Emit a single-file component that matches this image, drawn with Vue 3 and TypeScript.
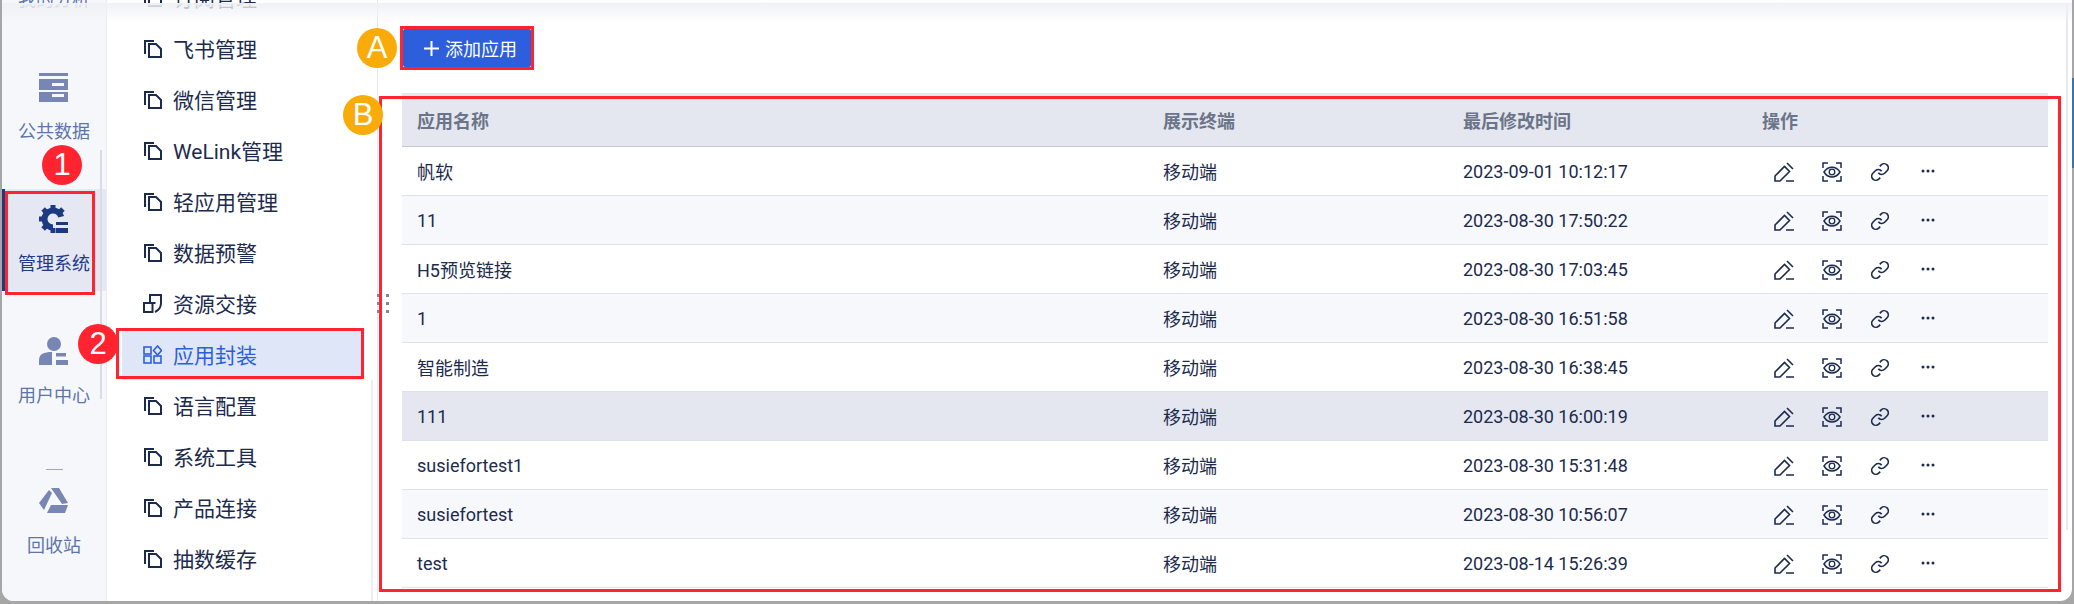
<script setup lang="ts">
const railItems = [
  { label: '我的分析', icon: 'chart', active: false },
  { label: '公共数据', icon: 'data', active: false },
  { label: '管理系统', icon: 'gear', active: true },
  { label: '用户中心', icon: 'user', active: false },
]

const gearTeeth = [-135, -90, -45, 0, 45, 180]

const menuItems = [
  { label: '订阅管理', icon: 'file' },
  { label: '飞书管理', icon: 'file' },
  { label: '微信管理', icon: 'file' },
  { label: 'WeLink管理', icon: 'file' },
  { label: '轻应用管理', icon: 'file' },
  { label: '数据预警', icon: 'file' },
  { label: '资源交接', icon: 'swap' },
  { label: '应用封装', icon: 'apps', active: true },
  { label: '语言配置', icon: 'file' },
  { label: '系统工具', icon: 'file' },
  { label: '产品连接', icon: 'file' },
  { label: '抽数缓存', icon: 'file' },
]

const rows = [
  { name: '帆软', time: '2023-09-01 10:12:17' },
  { name: '11', time: '2023-08-30 17:50:22' },
  { name: 'H5预览链接', time: '2023-08-30 17:03:45' },
  { name: '1', time: '2023-08-30 16:51:58' },
  { name: '智能制造', time: '2023-08-30 16:38:45' },
  { name: '111', time: '2023-08-30 16:00:19', hover: true },
  { name: 'susiefortest1', time: '2023-08-30 15:31:48' },
  { name: 'susiefortest', time: '2023-08-30 10:56:07' },
  { name: 'test', time: '2023-08-14 15:26:39' },
]
</script>

<template>
  <div class="edge"></div>
  <div class="window">
    <aside class="rail">
      <div
        v-for="item in railItems"
        :key="item.label"
        class="rail-item"
        :class="{ active: item.active }"
      >
        <svg class="rail-icon" viewBox="0 0 30 30">
          <g v-if="item.icon === 'data'">
            <rect x="0" y="1" width="29" height="3" />
            <path fill-rule="evenodd" d="M0 7h29v11H0zM13 11v3h12v-3z" />
            <path fill-rule="evenodd" d="M0 20h29v10H0zM13 22v3h12v-3z" />
          </g>
          <g v-else-if="item.icon === 'gear'">
            <path class="gear-ring" d="M22.200 12.800A8.500 8.500 0 1 0 14 23.500" />
            <rect
              v-for="a in gearTeeth"
              :key="a"
              x="11.500"
              y="1"
              width="5"
              height="5"
              :transform="`rotate(${a} 14 15)`"
            />
            <rect x="17" y="18" width="12" height="3" />
            <rect x="17" y="24" width="12" height="5" />
          </g>
          <g v-else-if="item.icon === 'user'">
            <circle cx="15" cy="8" r="7" />
            <path d="M0 29v-5c0-6 5-8 13-8v13z" />
            <rect x="17" y="17" width="10" height="3.5" />
            <rect x="17" y="24" width="12" height="5" />
          </g>
        </svg>
        <span class="rail-label">{{ item.label }}</span>
      </div>
      <div class="rail-line"></div>
      <div class="rail-item">
        <svg class="rail-icon" viewBox="0 0 30 30">
          <path d="M0 17 10 4l3 3-8 17z" />
          <path d="M12 2h8l9 15-6 1z" />
          <path d="M12 19h17l-3 8H8z" />
        </svg>
        <span class="rail-label">回收站</span>
      </div>
      <div class="rail-scroll"></div>
    </aside>

    <nav class="menu">
      <div
        v-for="item in menuItems"
        :key="item.label"
        class="menu-item"
        :class="{ active: item.active }"
      >
        <svg class="menu-icon" viewBox="0 0 19 19" fill="none" stroke="currentColor" stroke-width="2">
          <g v-if="item.icon === 'file'">
            <path d="M2 15V2h9" />
            <path d="M6 5h7l5 5v8H6z" />
          </g>
          <g v-else-if="item.icon === 'swap'">
            <path d="M7 9V1h11v8q0 6-6 9" />
            <path d="M1 9h8.500v9H1zM9.500 9h3" />
          </g>
          <g v-else stroke-width="1.600">
            <rect x="1" y="2" width="7" height="7" />
            <path d="m14.500 1 4 4.500-4 4.500-4-4.500z" />
            <rect x="1" y="11" width="7" height="7" />
            <rect x="11" y="11" width="7" height="7" />
          </g>
        </svg>
        <span>{{ item.label }}</span>
      </div>
      <div class="menu-scroll"></div>
    </nav>

    <main class="content">
      <div class="toolbar">
        <button class="add-btn" type="button">
          <svg class="plus" viewBox="0 0 15 15" stroke="currentColor" stroke-width="2">
            <path d="M7.500 0v15M0 7.500h15" />
          </svg>
          添加应用
        </button>
      </div>

      <div class="table">
        <div class="tr head">
          <div>应用名称</div>
          <div>展示终端</div>
          <div>最后修改时间</div>
          <div>操作</div>
        </div>
        <div
          v-for="(row, i) in rows"
          :key="row.name"
          class="tr"
          :class="{ stripe: i % 2 === 1, hover: row.hover }"
        >
          <div>{{ row.name }}</div>
          <div>移动端</div>
          <div>{{ row.time }}</div>
          <div class="ops">
            <svg viewBox="0 0 20 20" fill="none" stroke="currentColor" stroke-width="1.600">
              <path d="M1 19v-5L10.500 4.500l5 5L6 19z" />
              <path d="m13 1 6 6M12 19h8" />
            </svg>
            <svg viewBox="0 0 20 20" fill="none" stroke="currentColor" stroke-width="1.500">
              <path d="M1 6V1h5M14 1h5v5M19 14v5h-5M6 19H1v-5" />
              <path d="M2 10c4-6.500 12-6.500 16 0-4 6.500-12 6.500-16 0z" />
              <circle cx="10" cy="10" r="2.800" stroke-width="1.300" />
            </svg>
            <svg viewBox="0 0 24 24" fill="none" stroke="currentColor" stroke-width="2">
              <path d="M10 13a5 5 0 0 0 7.540.54l3-3a5 5 0 0 0-7.070-7.070l-1.720 1.710" />
              <path d="M14 11a5 5 0 0 0-7.540-.54l-3 3a5 5 0 0 0 7.070 7.070l1.710-1.710" />
            </svg>
            <svg class="more" viewBox="0 0 14 4" fill="currentColor">
              <circle cx="2" cy="2" r="1.500" />
              <circle cx="7" cy="2" r="1.500" />
              <circle cx="12" cy="2" r="1.500" />
            </svg>
          </div>
        </div>
      </div>
    </main>

    <div class="page-scroll"></div>
    <div class="top-shadow"></div>
    <div class="drag-handle"><i v-for="n in 6" :key="n"></i></div>

    <!-- 标注 -->
    <div class="mark mark-1"></div>
    <div class="mark mark-2"></div>
    <div class="mark mark-a"></div>
    <div class="mark mark-b"></div>
    <div class="badge red badge-1">1</div>
    <div class="badge red badge-2">2</div>
    <div class="badge amber badge-a">A</div>
    <div class="badge amber badge-b">B</div>
  </div>
</template>

<style>
html,
body {
  margin: 0;
  background: #a6a6a6;
}
</style>

<style scoped>
.edge {
  position: absolute;
  left: 2072px;
  top: 78px;
  width: 2px;
  height: 90px;
  background: #3a74b0;
}

.window {
  position: relative;
  display: flex;
  width: 2070px;
  height: 601px;
  margin-left: 2px;
  overflow: hidden;
  background: #fff;
  border-radius: 0 0 12px 12px;
  font-family: Roboto, "Noto Sans CJK SC", sans-serif;
  font-size: 18px;
  color: #1c2b4d;
}

.rail {
  position: relative;
  flex: none;
  width: 105px;
  height: 601px;
  box-sizing: border-box;
  padding-top: 1px;
  overflow: hidden;
  background: #f5f7fb;
  border-right: 1px solid #e9ecf3;
}

.rail-item:first-child {
  margin-top: -76px;
}

.rail-scroll {
  position: absolute;
  left: 98px;
  top: 150px;
  width: 2px;
  height: 249px;
  background: #d9dce5;
}

.rail-item {
  position: relative;
  height: 102px;
  margin-bottom: 30px;
  padding-top: 15px;
  box-sizing: border-box;
  text-align: center;
  color: #5d75a8;
}

.rail-item.active {
  background: #e5e8f2;
  border-left: 3px solid #1c3a80;
  color: #1f3a86;
  padding-right: 3px;
}

.rail-icon {
  display: block;
  width: 30px;
  height: 30px;
  margin: 0 auto;
  fill: #7886b3;
}

.active .rail-icon {
  fill: #1c3a80;
}

.gear-ring {
  fill: none;
  stroke: #1c3a80;
  stroke-width: 6;
}

.rail-label {
  display: block;
  margin-top: 17px;
  line-height: 26px;
  white-space: nowrap;
}

.rail-line {
  width: 17px;
  height: 1px;
  margin: 46px 0 0 44px;
  background: #9ba7c4;
}

.rail-line + .rail-item {
  margin-top: 1px;
}

.menu {
  position: relative;
  flex: none;
  width: 271px;
  height: 601px;
  box-sizing: border-box;
  padding: 0 15px;
  overflow: hidden;
  border-right: 1px solid #e6e8ee;
  font-size: 21px;
}

.menu-scroll {
  position: absolute;
  left: 264px;
  top: 380px;
  width: 2px;
  height: 221px;
  background: #eceef3;
}

.menu-item {
  display: flex;
  align-items: center;
  gap: 11px;
  height: 51px;
  padding-left: 21px;
  white-space: nowrap;
}

.menu-item:first-child {
  margin-top: -29px;
}

.menu-item.active {
  color: #2d5fdc;
  background: #dfe6f8;
  box-shadow: 0 1px #dfe6f8;
}

.menu-icon {
  flex: none;
  width: 19px;
  height: 19px;
  margin-top: 2px;
}

.content {
  flex: 1;
  min-width: 0;
  padding: 29px 0 0 24px;
}

.toolbar {
  height: 64px;
}

.add-btn {
  display: flex;
  align-items: center;
  gap: 6px;
  width: 128px;
  height: 38px;
  margin-left: 1px;
  padding: 0 0 0 21px;
  border: 0;
  border-radius: 2px;
  background: #2d5fdc;
  color: #fff;
  font: inherit;
}

.plus {
  flex: none;
  width: 15px;
  height: 15px;
}

.table {
  width: 1646px;
}

.tr {
  display: grid;
  grid-template-columns: 746px 300px 299px 301px;
  align-items: center;
  height: 49px;
  box-sizing: border-box;
  border-bottom: 1px solid #dfe2ea;
}

.tr > div {
  padding-left: 15px;
  white-space: nowrap;
}

.tr.head {
  height: 54px;
  background: #e4e7f0;
  border-bottom: 1px solid #c5c9d4;
  font-weight: 700;
  color: #6b7488;
}

.tr.stripe {
  background: #f7f8fc;
}

.tr.hover {
  background: #e4e7f0;
}

.tr > .ops {
  display: flex;
  align-items: center;
  gap: 28px;
  padding-left: 27px;
}

.ops svg {
  flex: none;
  width: 20px;
  height: 20px;
  margin-top: 1px;
}

.ops svg.more {
  width: 14px;
  height: 4px;
  margin: 0 0 0 3px;
}

.page-scroll {
  position: absolute;
  left: 2064px;
  top: 3px;
  width: 2px;
  height: 527px;
  background: #e8e9ef;
}

.top-shadow {
  position: absolute;
  left: 0;
  right: 0;
  top: 3px;
  height: 20px;
  background: linear-gradient(#eff1f5, rgba(255, 255, 255, 0));
  pointer-events: none;
}

.drag-handle {
  position: absolute;
  left: 375px;
  top: 294px;
  display: grid;
  grid-template-columns: 3px 3px;
  column-gap: 6px;
  row-gap: 5px;
}

.drag-handle i {
  width: 3px;
  height: 3px;
  background: #7e879c;
}

.mark {
  position: absolute;
  box-sizing: border-box;
  border: 3px solid #ff2430;
}

.mark-1 {
  left: 3px;
  top: 191px;
  width: 90px;
  height: 104px;
}

.mark-2 {
  left: 114px;
  top: 328px;
  width: 248px;
  height: 51px;
}

.mark-a {
  left: 398px;
  top: 26px;
  width: 134px;
  height: 44px;
}

.mark-b {
  left: 377px;
  top: 96px;
  width: 1682px;
  height: 496px;
}

.badge {
  position: absolute;
  display: flex;
  align-items: center;
  justify-content: center;
  width: 40px;
  height: 40px;
  border-radius: 50%;
  color: #fff;
  font-family: "Liberation Sans", Arial, sans-serif;
  font-size: 31px;
}

.red {
  background: #ff2430;
}

.amber {
  background: #f9ab0a;
}

.badge-1 {
  left: 40px;
  top: 145px;
}

.badge-2 {
  left: 76px;
  top: 324px;
}

.badge-a {
  left: 355px;
  top: 28px;
}

.badge-b {
  left: 341px;
  top: 95px;
}
</style>
